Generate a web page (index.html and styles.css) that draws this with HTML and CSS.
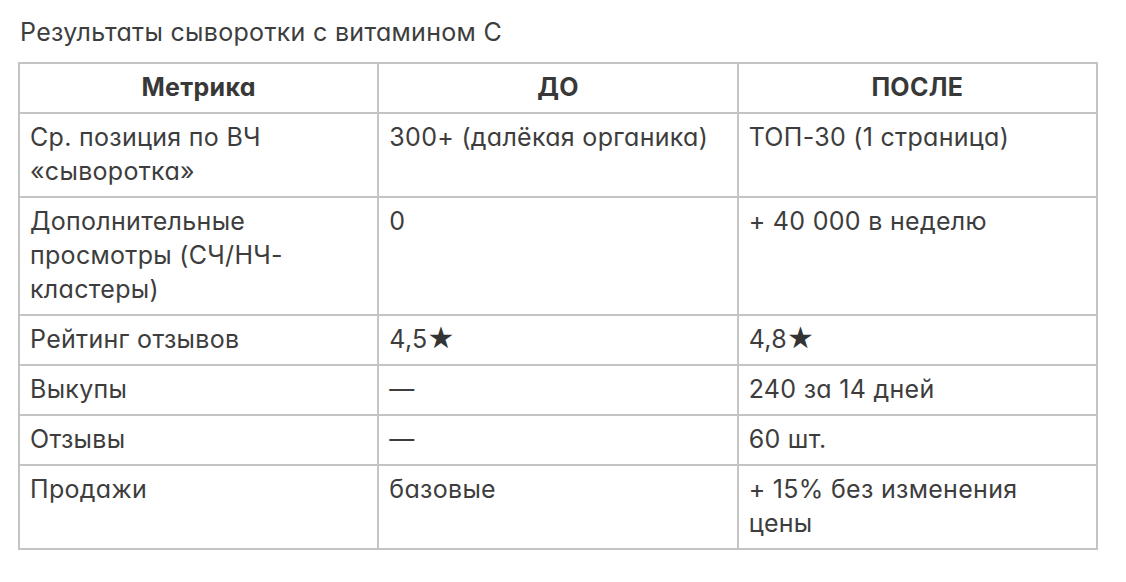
FILE: index.html
```html
<!DOCTYPE html>
<html lang="ru">
<head>
<meta charset="utf-8">
<link rel="stylesheet" href="styles.css">
</head>
<body>
<div class="page">
  <div class="caption">Результаты сыворотки с витамином C</div>
  <table class="results">
    <thead>
      <tr><th>Метрика</th><th>ДО</th><th>ПОСЛЕ</th></tr>
    </thead>
    <tbody>
      <tr><td>Ср. позиция по ВЧ «сыворотка»</td><td>300+ (далёкая органика)</td><td>ТОП-30 (1 страница)</td></tr>
      <tr><td>Дополнительные просмотры (СЧ/НЧ-кластеры)</td><td>0</td><td>+ 40 000 в неделю</td></tr>
      <tr><td>Рейтинг отзывов</td><td>4,5<span class="star">★</span></td><td>4,8<span class="star">★</span></td></tr>
      <tr><td>Выкупы</td><td>—</td><td>240 за 14 дней</td></tr>
      <tr><td>Отзывы</td><td>—</td><td>60 шт.</td></tr>
      <tr><td>Продажи</td><td>базовые</td><td>+ 15% без изменения цены</td></tr>
    </tbody>
  </table>
</div>
</body>
</html>
```
FILE: styles.css
```css
html, body {
  margin: 0;
  padding: 0;
  background: #ffffff;
}
.page {
  padding: 15px 0 0 18px;
  font-family: Inter, "Liberation Sans", sans-serif;
  font-feature-settings: "cv11" 1;
  font-size: 25px;
  letter-spacing: 0.3px;
  line-height: 34px;
  color: #3d3d3d;
}
.caption {
  padding-left: 2px;
  height: 34px;
  margin-bottom: 13px;
}
.results {
  width: 1080px;
  border-collapse: collapse;
  table-layout: fixed;
  border: 2px solid #c4c4c4;
}
.results th,
.results td {
  border: 2px solid #c4c4c4;
  padding: 6px 10px 8px 10px;
  vertical-align: top;
  text-align: left;
  font-weight: 400;
}
.results th {
  text-align: center;
  font-weight: 700;
  color: #383838;
  padding-top: 6px;
  padding-bottom: 8px;
}
.star {
  font-family: "DejaVu Sans", sans-serif;
  font-size: 30px;
  line-height: 0;
  color: #333333;
}
```
